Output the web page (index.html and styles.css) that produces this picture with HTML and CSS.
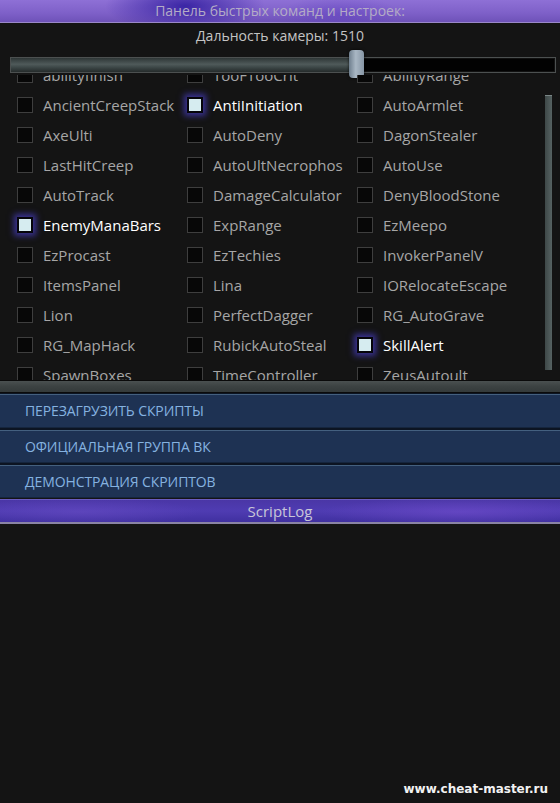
FILE: index.html
```html
<!DOCTYPE html>
<html lang="ru">

<head>
    <meta charset="UTF-8">
    <meta name="viewport" content="width=device-width, initial-scale=1.0">
    <title>Панель быстрых команд</title>
    <link rel="stylesheet" href="styles.css">
</head>

<body>

    <div class="panel-header">Панель быстрых команд и настроек:</div>

    <div class="camera-label">Дальность камеры: 1510</div>

    <div class="slider">
        <div class="slider-fill"></div>
        <div class="slider-thumb"></div>
    </div>

    <div class="list-box">
        <div class="list-grid">
            <div class="item"><span class="box"></span>abilityfinish</div>
            <div class="item"><span class="box"></span>TooFTooCrit</div>
            <div class="item"><span class="box"></span>AbilityRange</div>

            <div class="item"><span class="box"></span>AncientCreepStack</div>
            <div class="item checked"><span class="box"></span>AntiInitiation</div>
            <div class="item"><span class="box"></span>AutoArmlet</div>

            <div class="item"><span class="box"></span>AxeUlti</div>
            <div class="item"><span class="box"></span>AutoDeny</div>
            <div class="item"><span class="box"></span>DagonStealer</div>

            <div class="item"><span class="box"></span>LastHitCreep</div>
            <div class="item"><span class="box"></span>AutoUltNecrophos</div>
            <div class="item"><span class="box"></span>AutoUse</div>

            <div class="item"><span class="box"></span>AutoTrack</div>
            <div class="item"><span class="box"></span>DamageCalculator</div>
            <div class="item"><span class="box"></span>DenyBloodStone</div>

            <div class="item checked"><span class="box"></span>EnemyManaBars</div>
            <div class="item"><span class="box"></span>ExpRange</div>
            <div class="item"><span class="box"></span>EzMeepo</div>

            <div class="item"><span class="box"></span>EzProcast</div>
            <div class="item"><span class="box"></span>EzTechies</div>
            <div class="item"><span class="box"></span>InvokerPanelV</div>

            <div class="item"><span class="box"></span>ItemsPanel</div>
            <div class="item"><span class="box"></span>Lina</div>
            <div class="item"><span class="box"></span>IORelocateEscape</div>

            <div class="item"><span class="box"></span>Lion</div>
            <div class="item"><span class="box"></span>PerfectDagger</div>
            <div class="item"><span class="box"></span>RG_AutoGrave</div>

            <div class="item"><span class="box"></span>RG_MapHack</div>
            <div class="item"><span class="box"></span>RubickAutoSteal</div>
            <div class="item checked"><span class="box"></span>SkillAlert</div>

            <div class="item"><span class="box"></span>SpawnBoxes</div>
            <div class="item"><span class="box"></span>TimeController</div>
            <div class="item"><span class="box"></span>ZeusAutoult</div>
        </div>
        <div class="v-scroll"></div>
    </div>

    <div class="h-scroll"></div>

    <div class="buttons">
        <div class="btn">ПЕРЕЗАГРУЗИТЬ СКРИПТЫ</div>
        <div class="btn">ОФИЦИАЛЬНАЯ ГРУППА ВК</div>
        <div class="btn">ДЕМОНСТРАЦИЯ СКРИПТОВ</div>
    </div>

    <div class="log-header">ScriptLog</div>

    <div class="watermark">www.cheat-master.ru</div>

</body>

</html>
```

FILE: styles.css
```css
* {
    margin: 0;
    padding: 0;
    box-sizing: border-box;
}

body {
    width: 560px;
    height: 803px;
    background: #141414;
    font-family: "Open Sans", "Noto Sans", sans-serif;
    position: relative;
    overflow: hidden;
}

/* top purple bar */
.panel-header {
    height: 23px;
    line-height: 22px;
    text-align: center;
    font-size: 14px;
    color: #b4acc6;
    background:
        radial-gradient(ellipse 80px 26px at 185px 6px, rgba(50, 30, 160, 0.9), rgba(50, 30, 160, 0) 100%),
        radial-gradient(ellipse 60px 18px at 340px 14px, rgba(90, 60, 190, 0.5), rgba(90, 60, 190, 0) 100%),
        linear-gradient(180deg, #8e70d6 0%, #7e60c8 60%, #6e52b8 100%);
    border-bottom: 1px solid #9a88c8;
}

.camera-label {
    margin-top: 3px;
    height: 22px;
    line-height: 20px;
    text-align: center;
    font-size: 14px;
    color: #c4c4c4;
}

/* camera slider */
.slider {
    position: relative;
    margin: 9px 4px 0 10px;
    height: 16px;
    background: #020202;
    border: 1px solid #4c5050;
    box-shadow: inset 0 0 0 1px #111;
}

.slider-fill {
    width: 340px;
    height: 100%;
    background: linear-gradient(180deg, #2e3636 0%, #4f5a5a 45%, #3a4444 70%, #252b2b 100%);
}

.slider-thumb {
    position: absolute;
    left: 338px;
    top: -8px;
    width: 15px;
    height: 28px;
    border-radius: 4px;
    background: linear-gradient(90deg, #6f7f8e 0%, #a9b7c4 45%, #8796a5 100%);
    box-shadow: 0 0 3px rgba(0, 0, 0, 0.8);
}

/* script list */
.list-box {
    position: relative;
    height: 306px;
    margin-top: 2px;
    overflow: hidden;
    border-bottom: 1px solid #0a0a0a;
}

.list-grid {
    margin-top: -15px;
    padding-left: 17px;
    display: grid;
    grid-template-columns: 170px 170px 170px;
    grid-auto-rows: 30px;
}

.item {
    display: flex;
    align-items: center;
    gap: 10px;
    font-size: 15px;
    color: #a6a6a6;
    white-space: nowrap;
}

.box {
    flex: none;
    width: 16px;
    height: 16px;
    background: #070707;
    border: 1px solid #3e3e3e;
}

.item.checked {
    color: #ffffff;
}

.item.checked .box {
    background: #d6ecf0;
    border: 2px solid #05050a;
    box-shadow: 0 0 6px 3px rgba(70, 60, 190, 0.75);
}

.v-scroll {
    position: absolute;
    left: 545px;
    top: 20px;
    width: 7px;
    height: 275px;
    background: linear-gradient(90deg, #3e4848, #566262);
    border-top: 1px solid #7a8686;
}

.h-scroll {
    height: 12px;
    background: linear-gradient(180deg, #4a5050 0%, #3c4242 50%, #343a3a 100%);
    border-bottom: 1px solid #0b0b0b;
}

/* blue buttons */
.buttons {
    display: flex;
    flex-direction: column;
    gap: 2px;
    background: #0c1422;
    padding-top: 1px;
}

.btn {
    height: 33px;
    line-height: 31px;
    padding-left: 25px;
    font-size: 14px;
    letter-spacing: -0.1px;
    color: #85b2e0;
    background: #1e3253;
    border-top: 1px solid #44607f;
    border-bottom: 1px solid #15253d;
}

.btn:first-child {
    height: 34px;
    line-height: 32px;
}

.log-header {
    margin-top: 1px;
    height: 25px;
    line-height: 23px;
    text-align: center;
    font-size: 15px;
    color: #c8c6d8;
    background:
        radial-gradient(ellipse 120px 14px at 80px 12px, rgba(110, 80, 200, 0.45), rgba(110, 80, 200, 0) 100%),
        radial-gradient(ellipse 140px 14px at 460px 12px, rgba(120, 80, 210, 0.5), rgba(120, 80, 210, 0) 100%),
        linear-gradient(180deg, #4a36a6 0%, #4f3cb2 50%, #4030a0 100%);
    border-top: 1px solid #6b5cc0;
    border-bottom: 2px solid #8a84a4;
}

.watermark {
    position: absolute;
    right: 12px;
    bottom: 7px;
    font-family: "DejaVu Sans", sans-serif;
    font-weight: bold;
    font-size: 12px;
    color: #f2f2f2;
}
```
